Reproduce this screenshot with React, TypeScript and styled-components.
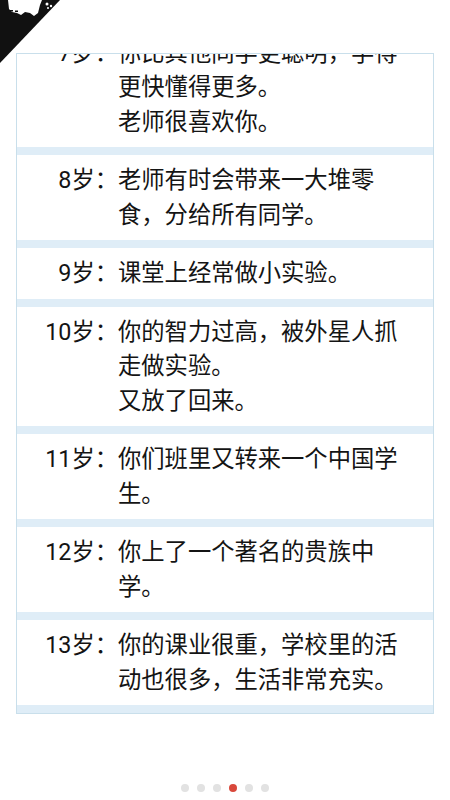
import React from "react";
import styled, { createGlobalStyle } from "styled-components";

const GlobalStyle = createGlobalStyle`
  html, body { margin: 0; padding: 0; background: #ffffff; }
  body { font-family: Roboto, "Noto Sans CJK SC", "Noto Sans", sans-serif; }
  * { box-sizing: border-box; }
`;

const Page = styled.div`
  position: relative;
  width: 450px;
  height: 800px;
  display: flex;
  flex-direction: column;
  align-items: flex-start;
  padding-top: 53px;
  overflow: hidden;
  background: #ffffff;
`;

const Corner = styled.svg`
  position: absolute;
  left: 0;
  top: 0;
  width: 70px;
  height: 70px;
`;

const ListFrame = styled.div`
  margin-left: 16px;
  width: 418px;
  height: 661px;
  border: 1px solid #c9dfeb;
  display: flex;
  flex-direction: column;
  justify-content: flex-end;
  overflow: hidden;
  background: #ffffff;
`;

const Row = styled.div`
  flex: none;
  display: grid;
  grid-template-columns: 101px 284px;
  padding: 8px 0;
  border-bottom: 8px solid #dfedf7;
  font-size: 23.3px;
  line-height: 34.5px;
  color: #141414;
`;

const Age = styled.div`
  text-align: right;
  white-space: nowrap;
`;

const Story = styled.div`
  line-break: strict;
`;

const Line = styled.div``;

const Dots = styled.div`
  margin-top: auto;
  margin-bottom: 8px;
  align-self: center;
  display: flex;
  gap: 8px;
`;

const Dot = styled.span<{ $active?: boolean }>`
  width: 8px;
  height: 8px;
  border-radius: 50%;
  background: ${(p) => (p.$active ? "#d9483b" : "#e2e2e2")};
`;

const items: { age: string; lines: string[] }[] = [
  { age: "7岁：", lines: ["你比其他同学更聪明，学得更快懂得更多。", "老师很喜欢你。"] },
  { age: "8岁：", lines: ["老师有时会带来一大堆零食，分给所有同学。"] },
  { age: "9岁：", lines: ["课堂上经常做小实验。"] },
  { age: "10岁：", lines: ["你的智力过高，被外星人抓走做实验。", "又放了回来。"] },
  { age: "11岁：", lines: ["你们班里又转来一个中国学生。"] },
  { age: "12岁：", lines: ["你上了一个著名的贵族中学。"] },
  { age: "13岁：", lines: ["你的课业很重，学校里的活动也很多，生活非常充实。"] },
];

export default function App() {
  return (
    <>
      <GlobalStyle />
      <Page>
        <ListFrame>
          {items.map((it) => (
            <Row key={it.age}>
              <Age>{it.age}</Age>
              <Story>
                {it.lines.map((l, i) => (
                  <Line key={i}>{l}</Line>
                ))}
              </Story>
            </Row>
          ))}
        </ListFrame>
        <Dots>
          {[0, 1, 2, 3, 4, 5].map((i) => (
            <Dot key={i} $active={i === 3} />
          ))}
        </Dots>
        <Corner viewBox="0 0 70 70">
          <polygon points="0,0 60,0 0,63" fill="#111" />
          <path
            d="M8,0 L42,0 L40,5 L38,13 L34,16 L30,13 L25,12 L21,15 L17,13 L12,12 L9,9 Z"
            fill="#fff"
          />
          <rect x="10" y="10" width="3" height="1.5" fill="#111" />
          <rect x="15" y="10.5" width="3" height="1.5" fill="#111" />
          <circle cx="47" cy="4" r="1.5" fill="#fff" />
          <circle cx="51" cy="6" r="1.2" fill="#fff" />
          <circle cx="48" cy="8" r="1" fill="#fff" />
        </Corner>
      </Page>
    </>
  );
}
